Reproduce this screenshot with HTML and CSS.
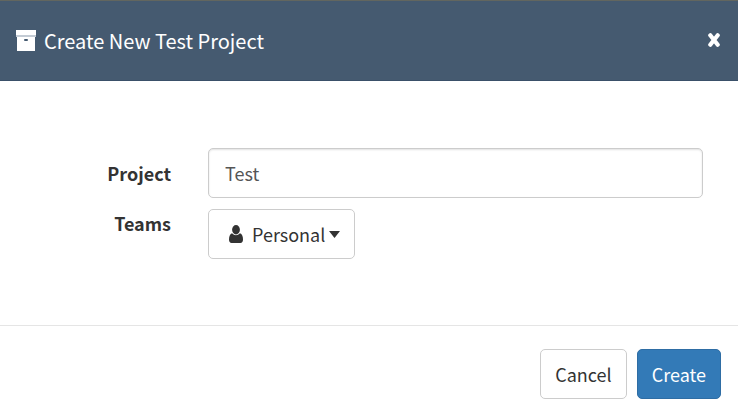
FILE: index.html
```html
<!DOCTYPE html>
<html lang="en">
<head>
<meta charset="utf-8">
<title>Create New Test Project</title>
<link rel="stylesheet" href="styles.css">
</head>
<body>
<form class="dialog" role="dialog" aria-labelledby="dialog-title">
  <header class="dialog-header">
    <svg class="icon-archive" viewBox="0 0 20 22" aria-hidden="true">
      <path fill="#fff" d="M0 0h20v5H0z"/>
      <path fill="#c3cbd4" d="M0 5h20v2H0z"/>
      <path fill="#fff" d="M1 7h18v14H1z"/>
      <rect x="8" y="9" width="4" height="2" rx="1" fill="#455a70"/>
    </svg>
    <h1 class="dialog-title" id="dialog-title">Create New Test Project</h1>
    <button class="close" type="button" aria-label="Close">
      <svg class="icon-close" viewBox="0 0 12 14" aria-hidden="true">
        <path d="M2.300 2.300l7.400 9.400M9.700 2.300l-7.400 9.400" stroke="#fff" stroke-width="4.200" stroke-linecap="round"/>
      </svg>
    </button>
  </header>
  <div class="dialog-body">
    <label class="label" for="project">Project</label>
    <input class="control input" id="project" type="text" value="Test">
    <label class="label label-top" for="teams">Teams</label>
    <button class="control team" id="teams" type="button" aria-haspopup="true">
      <svg class="icon-user" viewBox="0 0 14 18" aria-hidden="true">
        <path fill="#333" d="M3 8.300C1 9 0 11.500 0 14.500C0 16.800 1 18 2.500 18h9C13 18 14 16.800 14 14.500C14 11.500 13 9 11 8.300C8.500 10.800 5.500 10.800 3 8.300z"/>
        <ellipse cx="7" cy="4.700" rx="3.900" ry="4.700" fill="#333"/>
      </svg>
      <span>Personal</span>
      <svg class="icon-caret" viewBox="0 0 11 7" aria-hidden="true"><path fill="#333" d="M0 0h11L5.500 7z"/></svg>
    </button>
  </div>
  <footer class="dialog-footer">
    <button class="control" type="button">Cancel</button>
    <button class="control primary" type="submit">Create</button>
  </footer>
</form>
</body>
</html>
```

FILE: styles.css
```css
* {
  box-sizing: border-box;
}

body {
  margin: 0;
  background: #fff;
  color: #333;
  font: 18px/28px "Noto Sans CJK SC", "Open Sans", sans-serif;
}

.dialog {
  display: flex;
  flex-direction: column;
  min-height: 100vh;
}

.dialog-header {
  display: flex;
  align-items: center;
  gap: 8px;
  padding: 24px 16px;
  border-top: 1px solid #62665f;
  border-bottom: 1px solid #3a5069;
  background: #455a70;
  color: #fff;
}

.dialog-title {
  flex: 1;
  margin: 0;
  font-size: 20px;
  font-weight: 400;
  line-height: 31px;
}

.icon-archive {
  width: 20px;
  height: 22px;
}

.close {
  display: flex;
  padding: 0 2px 2px;
  border: 0;
  background: none;
}

.icon-close {
  width: 12px;
  height: 14px;
}

.dialog-body {
  flex: 1;
  display: grid;
  grid-template-columns: 171px 1fr;
  gap: 11px 37px;
  align-content: start;
  padding: 67px 35px 66px 0;
}

.label {
  align-self: center;
  font-weight: 700;
  text-align: right;
}

.label-top {
  align-self: start;
}

.control {
  height: 50px;
  padding: 0 14px;
  border: 1px solid #ccc;
  border-radius: 5px;
  background: #fff;
  color: #333;
  font: inherit;
}

.input {
  width: 100%;
  padding: 0 16px;
  color: #555;
  box-shadow: inset 0 1px 2px rgba(0, 0, 0, 0.12);
}

.team {
  display: flex;
  align-items: center;
  justify-self: start;
  padding: 0 14px 0 20px;
}

.icon-user {
  width: 14px;
  height: 18px;
  margin-right: 9px;
}

.icon-caret {
  width: 11px;
  height: 7px;
  margin-left: 4px;
}

.dialog-footer {
  display: flex;
  justify-content: flex-end;
  gap: 10px;
  padding: 23px 17px 21px;
  border-top: 1px solid #e5e5e5;
}

.primary {
  border-color: #2e6da4;
  background: #337ab7;
  color: #fff;
}
```
